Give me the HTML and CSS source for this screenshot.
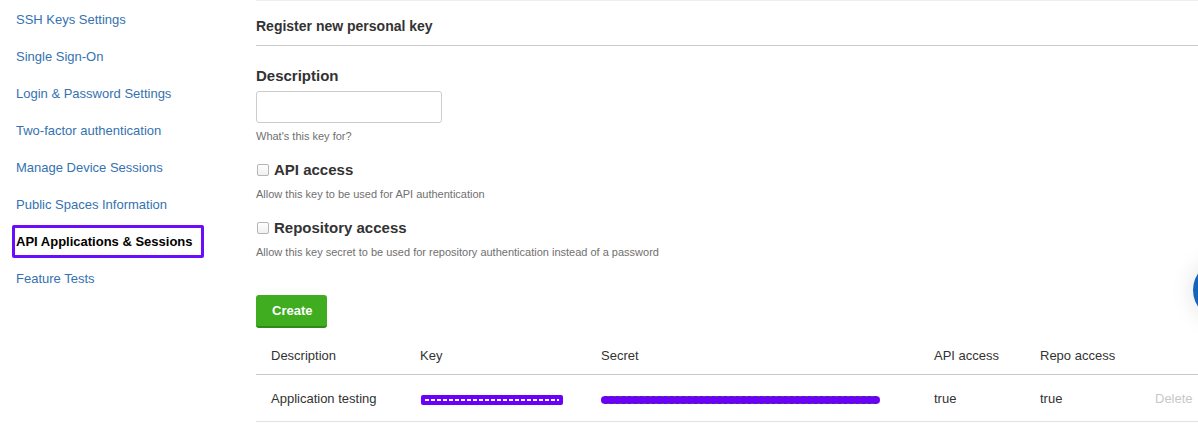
FILE: index.html
```html
<!DOCTYPE html>
<html lang="en">
<head>
<meta charset="utf-8">
<title>API Applications &amp; Sessions</title>
<link rel="stylesheet" href="styles.css">
</head>
<body>
<div class="page">
  <nav class="sidebar">
    <ul class="nav">
      <li><a href="#">SSH Keys Settings</a></li>
      <li><a href="#">Single Sign-On</a></li>
      <li><a href="#">Login &amp; Password Settings</a></li>
      <li><a href="#">Two-factor authentication</a></li>
      <li><a href="#">Manage Device Sessions</a></li>
      <li><a href="#">Public Spaces Information</a></li>
      <li class="active"><a href="#">API Applications &amp; Sessions</a></li>
      <li><a href="#">Feature Tests</a></li>
    </ul>
  </nav>
  <main class="main">
    <h2 class="section-title">Register new personal key</h2>
    <form class="form">
      <label class="label" for="desc">Description</label>
      <input class="input" id="desc" type="text">
      <p class="help">What's this key for?</p>
      <label class="check"><span class="box"></span>API access</label>
      <p class="help">Allow this key to be used for API authentication</p>
      <label class="check"><span class="box"></span>Repository access</label>
      <p class="help">Allow this key secret to be used for repository authentication instead of a password</p>
      <button class="btn" type="button">Create</button>
    </form>
    <table class="keys">
      <colgroup>
        <col class="c1"><col class="c2"><col class="c3"><col class="c4"><col class="c5"><col class="c6">
      </colgroup>
      <thead>
        <tr><th>Description</th><th>Key</th><th>Secret</th><th>API access</th><th>Repo access</th><th></th></tr>
      </thead>
      <tbody>
        <tr>
          <td>Application testing</td>
          <td><span class="redact redact-key"></span></td>
          <td><span class="redact redact-secret"></span></td>
          <td>true</td>
          <td>true</td>
          <td class="muted">Delete</td>
        </tr>
      </tbody>
    </table>
  </main>
</div>
<div class="chat-bubble"></div>
</body>
</html>
```
FILE: styles.css
```css
* { box-sizing: border-box; }
html, body { margin: 0; padding: 0; background: #fff; }
body {
  font-family: "Liberation Sans", Arial, sans-serif;
  font-size: 13px;
  color: #333;
  overflow: hidden;
}
.page { display: flex; align-items: flex-start; }
.sidebar { width: 256px; flex: 0 0 256px; }
.nav { list-style: none; margin: 0; padding: 1px 0 0; }
.nav li { height: 37px; display: flex; align-items: center; }
.nav a {
  display: block;
  padding-left: 16px;
  line-height: 17px;
  color: #3572b0;
  text-decoration: none;
}
.nav .active a {
  margin-left: 12px;
  width: 192px;
  height: 33px;
  padding: 5px 0 5px 1px;
  border: 3px solid #6a0dfa;
  border-radius: 2px;
  color: #000;
  font-weight: bold;
  line-height: 17px;
}
.main {
  flex: 1 1 auto;
  border-top: 1px solid #efefef;
}
.section-title {
  margin: 0;
  padding: 15px 0 9px;
  font-size: 14px;
  line-height: 20px;
  font-weight: bold;
  color: #333;
  border-bottom: 1px solid #ccc;
}
.form { display: flex; flex-direction: column; align-items: flex-start; padding-top: 20px; }
.label {
  font-size: 15px;
  line-height: 20px;
  font-weight: bold;
  color: #333;
}
.input {
  margin-top: 5px;
  width: 186px;
  height: 32px;
  border: 1px solid #ccc;
  border-radius: 3px;
  font: inherit;
  padding: 4px 6px;
}
.help {
  margin: 6px 0 0;
  font-size: 11px;
  line-height: 15px;
  color: #707070;
}
.check {
  display: flex;
  align-items: center;
  margin-top: 16px;
  font-size: 15px;
  line-height: 20px;
  font-weight: bold;
  color: #333;
}
.check + .help { margin-top: 7px; }
.box {
  width: 12px;
  height: 12px;
  margin: 0 5px 0 1px;
  border: 1px solid #b5b5b5;
  border-radius: 2px;
  background: linear-gradient(#fff, #f0f0f0);
}
.btn {
  margin-top: 35px;
  height: 33px;
  padding: 0 16px;
  border: 0;
  border-bottom: 2px solid #2f8a17;
  border-radius: 3px;
  background: #40ad20;
  color: #fff;
  font-family: inherit;
  font-size: 13px;
  font-weight: bold;
  width: 71px;
}
.keys {
  margin-top: 9px;
  width: 942px;
  border-collapse: collapse;
  table-layout: fixed;
}
.c1 { width: 149px; }
.c2 { width: 181px; }
.c3 { width: 333px; }
.c4 { width: 106px; }
.c5 { width: 115px; }
.c6 { width: 58px; }
.keys th {
  text-align: left;
  font-weight: normal;
  padding: 10px 15px;
  line-height: 17px;
  border-bottom: 1px solid #c8c8c8;
  white-space: nowrap;
}
.keys td {
  padding: 15px 15px 14px;
  line-height: 17px;
  border-bottom: 1px solid #e2e2e2;
  white-space: nowrap;
  vertical-align: middle;
}
.keys td.muted { color: #c8c8c8; }
.redact {
  display: inline-block;
  vertical-align: middle;
  background: #6a00fa;
}
.redact-key {
  width: 142px;
  height: 10px;
  margin-left: 1px;
  border-radius: 2px;
  background:
    repeating-linear-gradient(90deg, #fff 0 4px, transparent 4px 6px) center / 134px 2px no-repeat,
    #6a00fa;
}
.redact-secret {
  width: 279px;
  height: 8px;
  border-radius: 4px;
  background:
    repeating-linear-gradient(90deg, #5a4a7a 0 3px, transparent 3px 6px) top / 100% 1px no-repeat,
    repeating-linear-gradient(90deg, #5a4a7a 0 3px, transparent 3px 6px) bottom / 100% 1px no-repeat,
    #6a00fa;
}
.chat-bubble {
  position: fixed;
  left: 1193px;
  top: 260px;
  width: 60px;
  height: 60px;
  border-radius: 50%;
  background: #1763bc;
  box-shadow: 0 0 24px rgba(0, 0, 0, 0.12);
}
```
